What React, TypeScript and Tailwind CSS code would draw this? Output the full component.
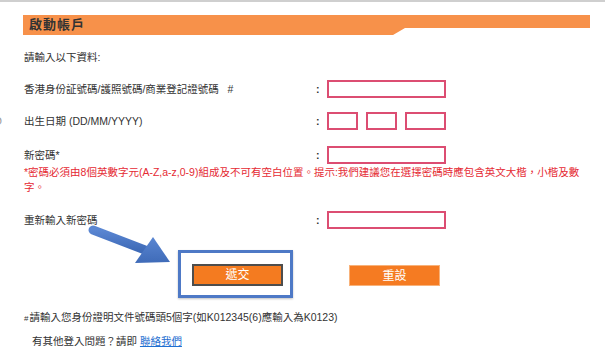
import { Fragment } from 'react'

const font = { fontFamily: '"Liberation Sans", "Noto Sans CJK TC", sans-serif' }

function Box({ w }: { w: string }) {
  return <div className={`${w} h-[18px] border-2 border-[#dc4d72] bg-white`} />
}

function Row({ label, children }: { label: React.ReactNode; children: React.ReactNode }) {
  return (
    <div className="flex items-center h-[18px]">
      <div className="w-[292px] text-[#333]">{label}</div>
      <div className="w-[11px] text-[#333] font-bold">:</div>
      <div className="flex gap-[8px]">{children}</div>
    </div>
  )
}

export default function App() {
  return (
    <div className="relative w-[605px] h-[357px] bg-white overflow-hidden text-[10.5px] leading-[16px]" style={font}>
      {/* top rule */}
      <div className="h-[2px] w-full bg-[#cfcfcf]" />

      {/* header bar */}
      <div className="ml-[23px] mt-[13px] w-[567px] h-[20px] bg-[#f7914a] [clip-path:polygon(0_0,100%_0,100%_13px,382px_13px,370px_100%,0_100%)] flex items-center pl-[6px]">
        <span className="text-[13px] font-bold text-[#333] tracking-[1px]">啟動帳戶</span>
      </div>

      <div className="ml-[24px]">
        <p className="mt-[14px] text-[#333]">請輸入以下資料:</p>

        <div className="mt-[15px]">
          <Row label={<Fragment>香港身份証號碼/護照號碼/商業登記證號碼&nbsp;&nbsp;&nbsp;#</Fragment>}>
            <Box w="w-[119px]" />
          </Row>
        </div>

        <div className="mt-[14px]">
          <Row label="出生日期 (DD/MM/YYYY)">
            <Box w="w-[31px]" />
            <Box w="w-[31px]" />
            <Box w="w-[41px]" />
          </Row>
        </div>

        <div className="mt-[16px]">
          <Row label="新密碼*">
            <Box w="w-[119px]" />
          </Row>
        </div>

        <p className="text-[#e52a33] leading-[15px] mt-[1px]">
          *密碼必須由8個英數字元(A-Z,a-z,0-9)組成及不可有空白位置。提示:我們建議您在選擇密碼時應包含英文大楷，小楷及數
          <br />
          字。
        </p>

        <div className="mt-[16px]">
          <Row label="重新輸入新密碼">
            <Box w="w-[119px]" />
          </Row>
        </div>

        {/* buttons */}
        <div className="flex items-start mt-[21px] ml-[154px]">
          <div className="w-[115px] h-[48px] border-[3px] border-[#4e79c6] pl-[11px] pt-[11px] shadow-[0_1px_2px_rgba(0,0,0,0.25)]">
            <button className="w-[91px] h-[22px] bg-[#f47b20] border-2 border-[#4d4d4d] text-white text-[12px] leading-none">
              遞交
            </button>
          </div>
          <button className="ml-[56px] mt-[15px] w-[91px] h-[21px] bg-[#f57b22] border border-[#f8b27a] text-white text-[12px] leading-none">
            重設
          </button>
        </div>

        <p className="mt-[11px] text-[#333]">
          <span className="text-[8px] mr-[1px]">#</span>請輸入您身份證明文件號碼頭5個字(如K012345(6)應輸入為K0123)
        </p>
        <p className="mt-[6px] ml-[8px] text-[#333]">
          有其他登入問題？請即 <a className="text-[#1f6fd1] underline" href="#">聯絡我們</a>
        </p>
      </div>

      {/* cut-off glyph at the left edge */}
      <span className="absolute left-[-6px] top-[113px] text-[11px] text-[#999]">D</span>

      {/* annotation arrow */}
      <svg className="absolute left-[85px] top-[220px]" width="95" height="50" viewBox="0 0 95 50">
        <defs>
          <linearGradient id="ag" x1="0" y1="0" x2="0" y2="1">
            <stop offset="0" stopColor="#5a86d2" />
            <stop offset="1" stopColor="#3f6bb8" />
          </linearGradient>
        </defs>
        <path d="M8 10 L60 30" stroke="url(#ag)" strokeWidth="9" strokeLinecap="round" />
        <polygon points="68,17 50,43 85,42" fill="url(#ag)" />
      </svg>
    </div>
  )
}
